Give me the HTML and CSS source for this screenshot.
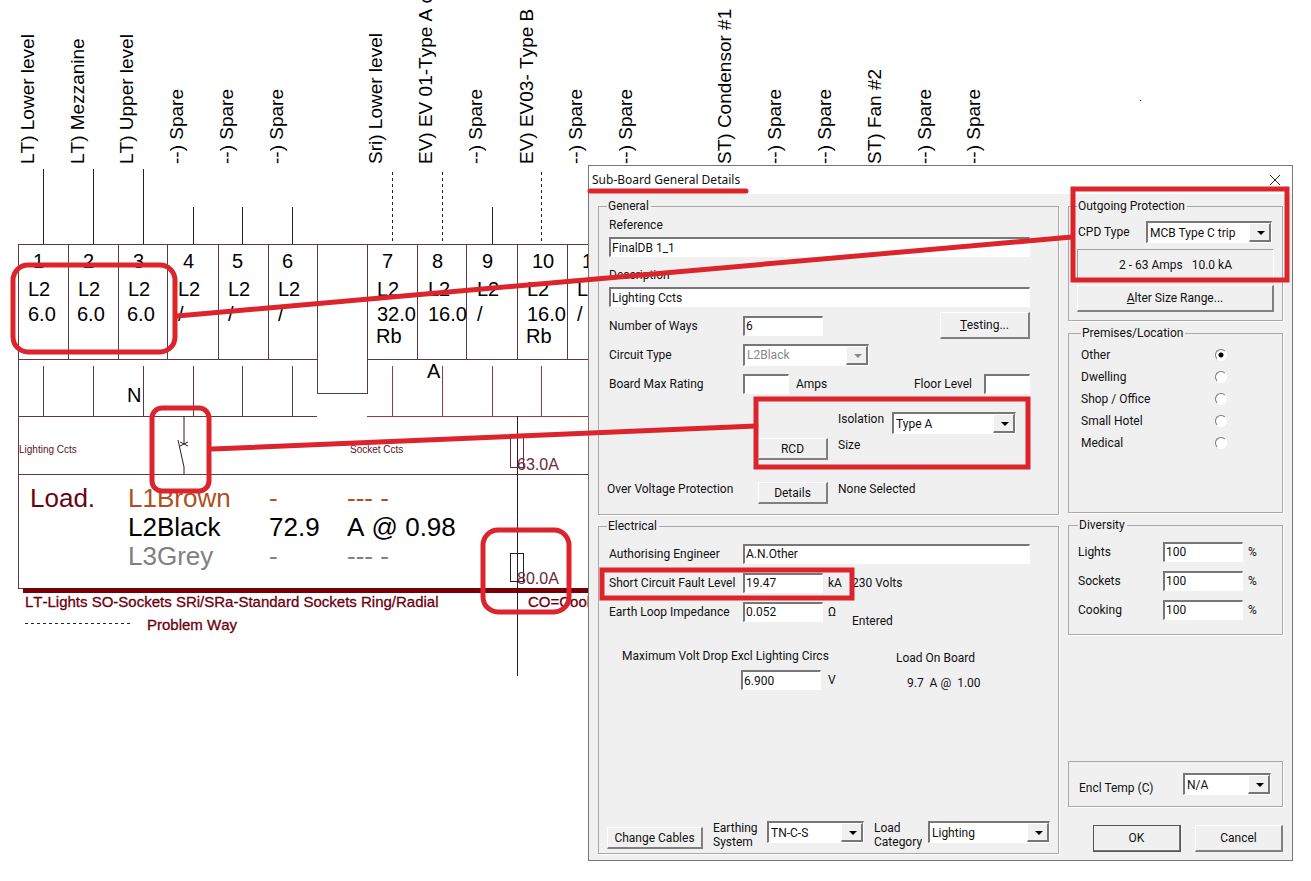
FILE: index.html
```html
<!DOCTYPE html>
<html lang="en">
<head>
<meta charset="utf-8">
<title>Sub-Board General Details</title>
<link rel="stylesheet" href="styles.css">
</head>
<body>
<main class="workspace">
<svg class="board" role="img" aria-label="Distribution board schematic">
  <g class="circuit-name">
    <text transform="translate(34 164) rotate(-90)">LT) Lower level</text>
    <text transform="translate(84 164) rotate(-90)">LT) Mezzanine</text>
    <text transform="translate(133 164) rotate(-90)">LT) Upper level</text>
    <text transform="translate(183 164) rotate(-90)">--) Spare</text>
    <text transform="translate(233 164) rotate(-90)">--) Spare</text>
    <text transform="translate(283 164) rotate(-90)">--) Spare</text>
    <text transform="translate(382 164) rotate(-90)">Sri) Lower level</text>
    <text transform="translate(432 164) rotate(-90)">EV) EV 01-Type A c</text>
    <text transform="translate(482 164) rotate(-90)">--) Spare</text>
    <text transform="translate(533 164) rotate(-90)">EV) EV03- Type B</text>
    <text transform="translate(582 164) rotate(-90)">--) Spare</text>
    <text transform="translate(632 164) rotate(-90)">--) Spare</text>
    <text transform="translate(731 164) rotate(-90)">ST) Condensor #1</text>
    <text transform="translate(781 164) rotate(-90)">--) Spare</text>
    <text transform="translate(831 164) rotate(-90)">--) Spare</text>
    <text transform="translate(881 164) rotate(-90)">ST) Fan #2</text>
    <text transform="translate(931 164) rotate(-90)">--) Spare</text>
    <text transform="translate(980 164) rotate(-90)">--) Spare</text>
  </g>
  <path class="wire" d="M43 169V244M93 169V244M143 169V244M193 207V244M242 207V244M292 207V244M492 207V244"/>
  <path class="wire wire-dashed" d="M392 172V244M442 172V244M541 172V244"/>
  <path class="frame" d="M18 588V244H600M68 244V359M118 244V359M167 244V359M218 244V359M268 244V359M18 359H317M317 244V393H367V244M367 359H600M417 244V359M466 244V359M517 244V359M567 244V359M18 416H317M18 474H600M18 588H600"/>
  <path class="frame" d="M43 366V416M93 366V416M143 366V416M193 366V416M242 366V416M292 366V416"/>
  <path class="frame-red" d="M392 366V416M442 366V416M492 366V416M541 366V416M367 416H600"/>
  <g class="way">
    <text x="33" y="268">1</text><text x="83" y="268">2</text><text x="133" y="268">3</text><text x="183" y="268">4</text><text x="232" y="268">5</text><text x="282" y="268">6</text>
    <text x="382" y="268">7</text><text x="432" y="268">8</text><text x="482" y="268">9</text><text x="532" y="268">10</text><text x="582" y="268">11</text>
    <text x="28" y="296">L2</text><text x="78" y="296">L2</text><text x="128" y="296">L2</text><text x="178" y="296">L2</text><text x="228" y="296">L2</text><text x="278" y="296">L2</text>
    <text x="377" y="296">L2</text><text x="428" y="296">L2</text><text x="477" y="296">L2</text><text x="527" y="296">L2</text><text x="577" y="296">L2</text>
    <text x="28" y="321">6.0</text><text x="77" y="321">6.0</text><text x="127" y="321">6.0</text><text x="178" y="321">/</text><text x="228" y="321">/</text><text x="278" y="321">/</text>
    <text x="377" y="321">32.0</text><text x="428" y="321">16.0</text><text x="477" y="321">/</text><text x="527" y="321">16.0</text><text x="577" y="321">/</text>
    <text x="376" y="343">Rb</text><text x="526" y="343">Rb</text>
    <text x="127" y="402">N</text><text x="427" y="378">A</text>
  </g>
  <g class="section"><text x="19" y="453">Lighting Ccts</text><text x="350" y="453">Socket Ccts</text></g>
  <path class="symbol" d="M184 416V444M178 440L184 467V474M180 442L188 446M180 446L188 442"/>
  <path class="feeder" d="M517 416V676"/>
  <rect class="fuse-red" x="510" y="437" width="13" height="30"/>
  <rect class="fuse" x="510" y="553" width="13" height="28"/>
  <g class="rating"><text x="517" y="470">63.0A</text><text x="517" y="584">80.0A</text></g>
  <rect class="base" x="23" y="588" width="580" height="5"/>
  <g class="load">
    <text class="maroon" x="30" y="507">Load.</text>
    <text class="brown" x="128" y="507">L1Brown</text><text class="brown" x="269" y="507">-</text><text class="brown" x="347" y="507">--- -</text>
    <text x="128" y="536">L2Black</text><text x="269" y="536">72.9</text><text x="347" y="536">A @ 0.98</text>
    <text class="grey" x="128" y="565">L3Grey</text><text class="grey" x="269" y="565">-</text><text class="grey" x="347" y="565">--- -</text>
  </g>
  <g class="legend-text">
    <text x="25" y="607">LT-Lights SO-Sockets SRi/SRa-Standard Sockets Ring/Radial</text>
    <text x="528" y="607">CO=Cooker</text>
    <text x="147" y="630">Problem Way</text>
  </g>
  <path class="wire wire-dashed" d="M25 623H133"/>
  <rect x="1140" y="100" width="1" height="1"/>
</svg>

<form class="dialog" aria-labelledby="dialog-title">
  <header class="titlebar">
    <h1 id="dialog-title" class="title">Sub-Board General Details</h1>
    <button type="button" class="close" aria-label="Close"><svg width="12" height="12" viewBox="0 0 12 12"><path d="M1 1L11 11M11 1L1 11"/></svg></button>
  </header>
  <div class="content">
    <div class="main-column">
      <fieldset class="group">
        <legend>General</legend>
        <div class="stack">
          <label for="reference">Reference</label>
          <input id="reference" class="field" value="FinalDB 1_1">
          <label for="description" class="spaced">Description</label>
          <input id="description" class="field" value="Lighting Ccts">
        </div>
        <div class="rows general-rows">
          <div class="row">
            <label for="ways">Number of Ways</label>
            <input id="ways" class="field medium" value="6">
            <button type="button" class="btn testing"><u>T</u>esting...</button>
          </div>
          <div class="row">
            <label for="circuit">Circuit Type</label>
            <span class="combo circuit disabled"><select id="circuit" disabled><option>L2Black</option></select></span>
          </div>
          <div class="row">
            <label for="rating">Board Max Rating</label>
            <input id="rating" class="field short"><span class="unit">Amps</span>
            <label for="floor" class="floor-label">Floor Level</label>
            <input id="floor" class="field short">
          </div>
        </div>
        <div class="device-grid">
          <label for="isolation" class="col-text">Isolation</label>
          <span class="combo"><select id="isolation"><option>Type A</option></select></span>
          <button type="button" class="btn col-button">RCD</button><span class="col-text">Size</span>
        </div>
        <div class="device-grid over-voltage">
          <span>Over Voltage Protection</span>
          <button type="button" class="btn col-button">Details</button><span class="col-rest">None Selected</span>
        </div>
      </fieldset>

      <fieldset class="group">
        <legend>Electrical</legend>
        <div class="rows electrical-rows">
          <div class="row">
            <label for="engineer">Authorising Engineer</label>
            <input id="engineer" class="field wide" value="A.N.Other">
          </div>
          <div class="row">
            <label for="fault">Short Circuit Fault Level</label>
            <input id="fault" class="field medium" value="19.47"><span class="unit ohm">kA</span><span>230 Volts</span>
          </div>
          <div class="row">
            <label for="impedance">Earth Loop Impedance</label>
            <input id="impedance" class="field medium" value="0.052"><span class="unit ohm">Ω</span><span class="entered">Entered</span>
          </div>
        </div>
        <div class="summary">
          <div>
            <label for="drop">Maximum Volt Drop Excl Lighting Circs</label>
            <div class="drop-row"><input id="drop" class="field medium" value="6.900"><span>V</span></div>
          </div>
          <div class="board-load">
            <span>Load On Board</span>
            <span class="load-value">9.7&nbsp; A @&nbsp; 1.00</span>
          </div>
        </div>
        <div class="bottom-bar">
          <button type="button" class="btn cables">Change Cables</button>
          <label for="earthing" class="two-line">Earthing System</label>
          <span class="combo earthing"><select id="earthing"><option>TN-C-S</option></select></span>
          <label for="category" class="two-line">Load Category</label>
          <span class="combo category"><select id="category"><option>Lighting</option></select></span>
        </div>
      </fieldset>
    </div>

    <div class="side-column">
      <fieldset class="group">
        <legend>Outgoing Protection</legend>
        <div class="cpd">
          <label for="cpd">CPD Type</label>
          <span class="combo"><select id="cpd"><option>MCB Type C trip</option></select></span>
        </div>
        <output class="range">2 - 63 Amps &nbsp; 10.0 kA</output>
        <button type="button" class="btn alter"><u>A</u>lter Size Range...</button>
      </fieldset>
      <fieldset class="group premises">
        <legend>Premises/Location</legend>
        <label class="choice">Other<input type="radio" name="premises" checked></label>
        <label class="choice">Dwelling<input type="radio" name="premises"></label>
        <label class="choice">Shop / Office<input type="radio" name="premises"></label>
        <label class="choice">Small Hotel<input type="radio" name="premises"></label>
        <label class="choice">Medical<input type="radio" name="premises"></label>
      </fieldset>
      <fieldset class="group diversity">
        <legend>Diversity</legend>
        <div class="percent"><label for="lights">Lights</label><input id="lights" class="field medium" value="100"><span>%</span></div>
        <div class="percent"><label for="sockets">Sockets</label><input id="sockets" class="field medium" value="100"><span>%</span></div>
        <div class="percent"><label for="cooking">Cooking</label><input id="cooking" class="field medium" value="100"><span>%</span></div>
      </fieldset>
      <div class="side-foot">
        <div class="enclosure">
          <label for="temp">Encl Temp (C)</label>
          <span class="combo"><select id="temp"><option>N/A</option></select></span>
        </div>
        <div class="actions">
          <button type="submit" class="btn default">OK</button>
          <button type="button" class="btn">Cancel</button>
        </div>
      </div>
    </div>
  </div>
</form>

<svg class="markup" aria-hidden="true">
  <rect x="13" y="265" width="162" height="87" rx="15"/>
  <path d="M177 316L1072 237"/>
  <rect x="152" y="408" width="57" height="83" rx="10"/>
  <path d="M212 449L756 426"/>
  <rect x="483" y="530" width="86" height="82" rx="15"/>
  <rect x="1073" y="189" width="214" height="91"/>
  <rect x="756" y="399" width="272" height="68"/>
  <rect x="602" y="570" width="250" height="28"/>
  <path d="M590 191H746"/>
</svg>
</main>
</body>
</html>
```
FILE: styles.css
```css
* { box-sizing: border-box; }

body {
  margin: 0;
  background: #fff;
  color: #111;
  font: 12px/14px Roboto, "Liberation Sans", sans-serif;
}

.workspace {
  position: relative;
  min-height: 100vh;
  padding: 165px 0 20px 588px;
}

/* Schematic */
.board, .markup {
  position: absolute;
  inset: 0;
  width: 100%;
  height: 100%;
  font-family: "Liberation Sans", Arial, sans-serif;
  font-kerning: none;
}
.board path, .fuse, .fuse-red { fill: none; shape-rendering: crispEdges; }
.board .symbol { shape-rendering: auto; }
.circuit-name { font-size: 19px; }
.way { font-size: 20px; }
.section { font-size: 10px; fill: #5c1420; }
.rating { font-size: 16px; fill: #6b2a34; }
.load { font-size: 26px; }
.legend-text { font-size: 15px; fill: #6a0010; stroke: #6a0010; stroke-width: .3; }
.maroon { fill: #6a0410; }
.brown { fill: #b05020; }
.grey { fill: #808080; }
.wire { stroke: #222; }
.wire-dashed { stroke-dasharray: 3 3; }
.frame { stroke: #5e3a40; }
.frame-red { stroke: #943c46; }
.feeder, .symbol { stroke: #33191f; }
.fuse { stroke: #222; }
.fuse-red { stroke: #6b2a34; }
.base { fill: #750006; }

/* Red review marks */
.markup { pointer-events: none; fill: none; stroke: #dc242c; stroke-width: 5; }
.markup path { stroke-linecap: round; }

/* Dialog */
.dialog {
  position: relative;
  width: 705px;
  border: 1px solid #777;
  background: #f0f0f0;
}
.titlebar {
  display: flex;
  align-items: center;
  justify-content: space-between;
  height: 28px;
  padding: 0 10px 0 3px;
  background: #fff;
}
.title { margin: 0; font: 12px/16px "Noto Sans", "Open Sans", sans-serif; }
.close { display: flex; padding: 1px; border: 0; background: none; }
.close path { stroke: #222; fill: none; }

.content {
  display: grid;
  grid-template-columns: minmax(0, 1fr) 215px;
  gap: 9px;
  padding: 5px 9px 6px;
}
.main-column { display: grid; gap: 4px; }
.side-column { display: flex; flex-direction: column; gap: 5px; }

.group {
  min-width: 0;
  margin: 0;
  padding: 0 8px;
  border: 1px solid #a9a9a9;
  box-shadow: 1px 1px 0 #fff;
}
.group legend { padding: 0 2px 0 1px; line-height: 14px; }

.field {
  height: 20px;
  min-width: 0;
  padding: 0 1px;
  border: 1px solid #fff;
  border-top: 2px solid #777;
  border-left: 2px solid #777;
  border-radius: 0;
  background: #fff;
  color: #111;
  font: inherit;
}
.medium { width: 80px; }
.short { width: 46px; }
.wide { flex: 1; }

.btn {
  height: 22px;
  padding: 0 4px;
  border: 1px solid #fff;
  border-right: 2px solid #808080;
  border-bottom: 2px solid #808080;
  border-radius: 0;
  background: #f0f0f0;
  color: #111;
  font: inherit;
}

.combo {
  position: relative;
  display: block;
  height: 22px;
  border: 1px solid #fff;
  border-top: 2px solid #777;
  border-left: 2px solid #777;
  background: #fff;
}
.combo select {
  display: block;
  width: 100%;
  height: 100%;
  padding: 0 20px 0 2px;
  border: 0;
  appearance: none;
  background: none;
  color: #111;
  font: inherit;
  opacity: 1;
}
.combo::before {
  content: "";
  position: absolute;
  inset: 0 0 0 auto;
  width: 19px;
  border: 1px solid #fff;
  border-right: 2px solid #777;
  border-bottom: 2px solid #777;
  background: #f0f0f0;
  pointer-events: none;
}
.combo::after {
  content: "";
  position: absolute;
  right: 6px;
  top: 8px;
  border: 4px solid transparent;
  border-top-color: #000;
  border-bottom: 0;
  pointer-events: none;
}
.combo.disabled select { color: #888; }
.combo.disabled::after { border-top-color: #888; }

.stack { display: grid; padding: 0 20px 0 2px; }
.stack label { line-height: 24px; }
.stack .spaced { margin-top: 6px; }

.rows { padding: 0 20px 0 2px; }
.row { display: flex; align-items: center; height: 29px; }
.row > label:first-child { width: 134px; }
.general-rows { padding-top: 4px; }
.electrical-rows { padding-top: 6px; }
.testing { width: 90px; height: 27px; margin-left: auto; }
.circuit { width: 126px; }
.unit { margin-left: 7px; }
.ohm { width: 24px; margin-left: 5px; }
.floor-label { margin-left: auto; padding-right: 12px; }
.entered { margin-top: 18px; }

.device-grid {
  display: grid;
  grid-template-columns: 151px 70px 64px 124px;
  grid-auto-rows: 22px;
  row-gap: 4px;
  padding: 14px 0 0;
}
.device-grid > .col-text { grid-column: 3; padding-left: 10px; }
.device-grid > .col-rest { grid-column: 3 / 5; padding-left: 10px; }
.device-grid > .col-button { grid-column: 2; }
.device-grid.over-voltage { padding: 22px 0 10px; }

.summary {
  display: grid;
  grid-template-columns: 274px 1fr;
  padding: 23px 0 0 15px;
}
.drop-row { display: flex; align-items: center; gap: 7px; padding: 7px 0 0 119px; }
.board-load { display: grid; align-content: start; gap: 11px; padding-top: 2px; }
.load-value { padding-left: 11px; }

.bottom-bar { display: flex; padding: 131px 0 4px; }
.cables { width: 96px; align-self: flex-end; }
.two-line { width: 54px; margin-left: 10px; }
.earthing { width: 97px; }
.category { flex: 1; }

.cpd { display: grid; grid-template-columns: 68px 1fr; align-items: center; padding: 8px 2px 6px 1px; }
.range {
  display: grid;
  place-items: center;
  height: 31px;
  margin-bottom: 5px;
  border: 1px solid #fff;
  border-top-color: #a0a0a0;
  border-left-color: #a0a0a0;
}
.alter { width: 100%; height: 27px; margin-bottom: 8px; }

.premises { padding: 4px 55px 58px 12px; }
.choice { display: flex; align-items: center; justify-content: space-between; height: 22px; }
.choice input {
  appearance: none;
  width: 12px;
  height: 12px;
  margin: 0;
  border: 1px solid #fff;
  border-top-color: #777;
  border-left-color: #777;
  border-radius: 50%;
  background: #fff;
}
.choice input:checked { background: radial-gradient(circle, #000 0 2px, #fff 3px); }

.diversity { padding: 5px 10px 10px 9px; }
.percent { display: grid; grid-template-columns: 85px 80px 1fr; align-items: center; height: 29px; }
.percent span { padding-left: 5px; }

.side-foot { margin-top: auto; }
.enclosure {
  display: grid;
  grid-template-columns: 104px 88px;
  align-items: center;
  padding: 11px 10px;
  border: 1px solid #a9a9a9;
  box-shadow: 1px 1px 0 #fff;
}
.enclosure label { padding-top: 8px; }
.actions { display: flex; justify-content: flex-end; gap: 14px; padding: 18px 0 2px; }
.actions .btn { width: 88px; height: 27px; }
.actions .default { outline: 1px solid #555; outline-offset: -1px; border-color: #fff #777 #777 #fff; }
```
